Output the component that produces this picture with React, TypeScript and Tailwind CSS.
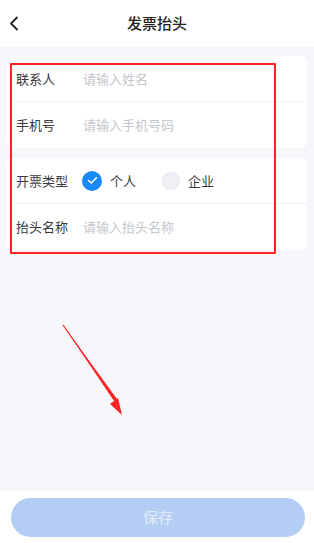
import React from "react";

const font = { fontFamily: '"Noto Sans CJK SC", "Noto Sans", sans-serif' };

function Row({ label, placeholder, divider }: { label: string; placeholder: string; divider?: boolean }) {
  return (
    <div className={"flex h-[46px] items-center ml-[9px] mr-0 " + (divider ? "border-b border-[#eef0f3]" : "")}>
      <span className="w-[67px] text-[13px] text-[#3a3a3c]">{label}</span>
      <span className="text-[13px] text-[#c4c7cc]">{placeholder}</span>
    </div>
  );
}

export default function App() {
  return (
    <div className="relative w-[314px] h-[543px] bg-[#f6f7fb] flex flex-col" style={font}>
      <header className="h-[47px] bg-white flex items-center justify-center relative shrink-0">
        <svg className="absolute left-[9px] top-[16px]" width="10" height="15" viewBox="0 0 10 15" fill="none">
          <path d="M8 1.5 L2 7.5 L8 13.5" stroke="#222" strokeWidth="1.8" strokeLinecap="round" strokeLinejoin="round" />
        </svg>
        <span className="text-[15px] font-medium text-[#222]">发票抬头</span>
      </header>

      <div className="flex-1 px-[7px] pt-[9px]">
        <div className="bg-white rounded-[6px]">
          <Row label="联系人" placeholder="请输入姓名" divider />
          <Row label="手机号" placeholder="请输入手机号码" />
        </div>
        <div className="bg-white rounded-[6px] mt-[10px]">
          <div className="flex h-[46px] items-center ml-[9px] border-b border-[#eef0f3]">
            <span className="w-[66px] text-[13px] text-[#3a3a3c]">开票类型</span>
            <span className="w-[20px] h-[20px] rounded-full bg-[#1989fa] flex items-center justify-center">
              <svg width="11" height="9" viewBox="0 0 11 9" fill="none">
                <path d="M1.5 4.5 L4.2 7 L9.5 1.8" stroke="white" strokeWidth="1.6" strokeLinecap="round" strokeLinejoin="round" />
              </svg>
            </span>
            <span className="ml-[8px] text-[13px] text-[#3a3a3c]">个人</span>
            <span className="ml-[26px] w-[18px] h-[18px] rounded-full bg-[#eef0f5] border border-[#e6e8ee]" />
            <span className="ml-[8px] text-[13px] text-[#3a3a3c]">企业</span>
          </div>
          <Row label="抬头名称" placeholder="请输入抬头名称" />
        </div>
      </div>

      <div className="h-[52px] bg-white shrink-0 px-[11px] pt-[7px]">
        <button className="w-[294px] h-[39px] rounded-full bg-[#b3cdf4] text-[15px] text-[#e3ebfa]">保存</button>
      </div>

      <div className="absolute left-[10px] top-[63px] w-[266px] h-[191px] border-2 border-[#f22] rounded-[1px] pointer-events-none" />

      <svg className="absolute left-0 top-0 pointer-events-none" width="314" height="543" viewBox="0 0 314 543">
        <path d="M63 325 L114 401 L117 399 Z" fill="#ff2020" />
        <path d="M63 325 L116 401" stroke="#ff2020" strokeWidth="1.2" />
        <path d="M122 415 L110 404 L118 398 Z" fill="#ff2020" />
      </svg>
    </div>
  );
}
